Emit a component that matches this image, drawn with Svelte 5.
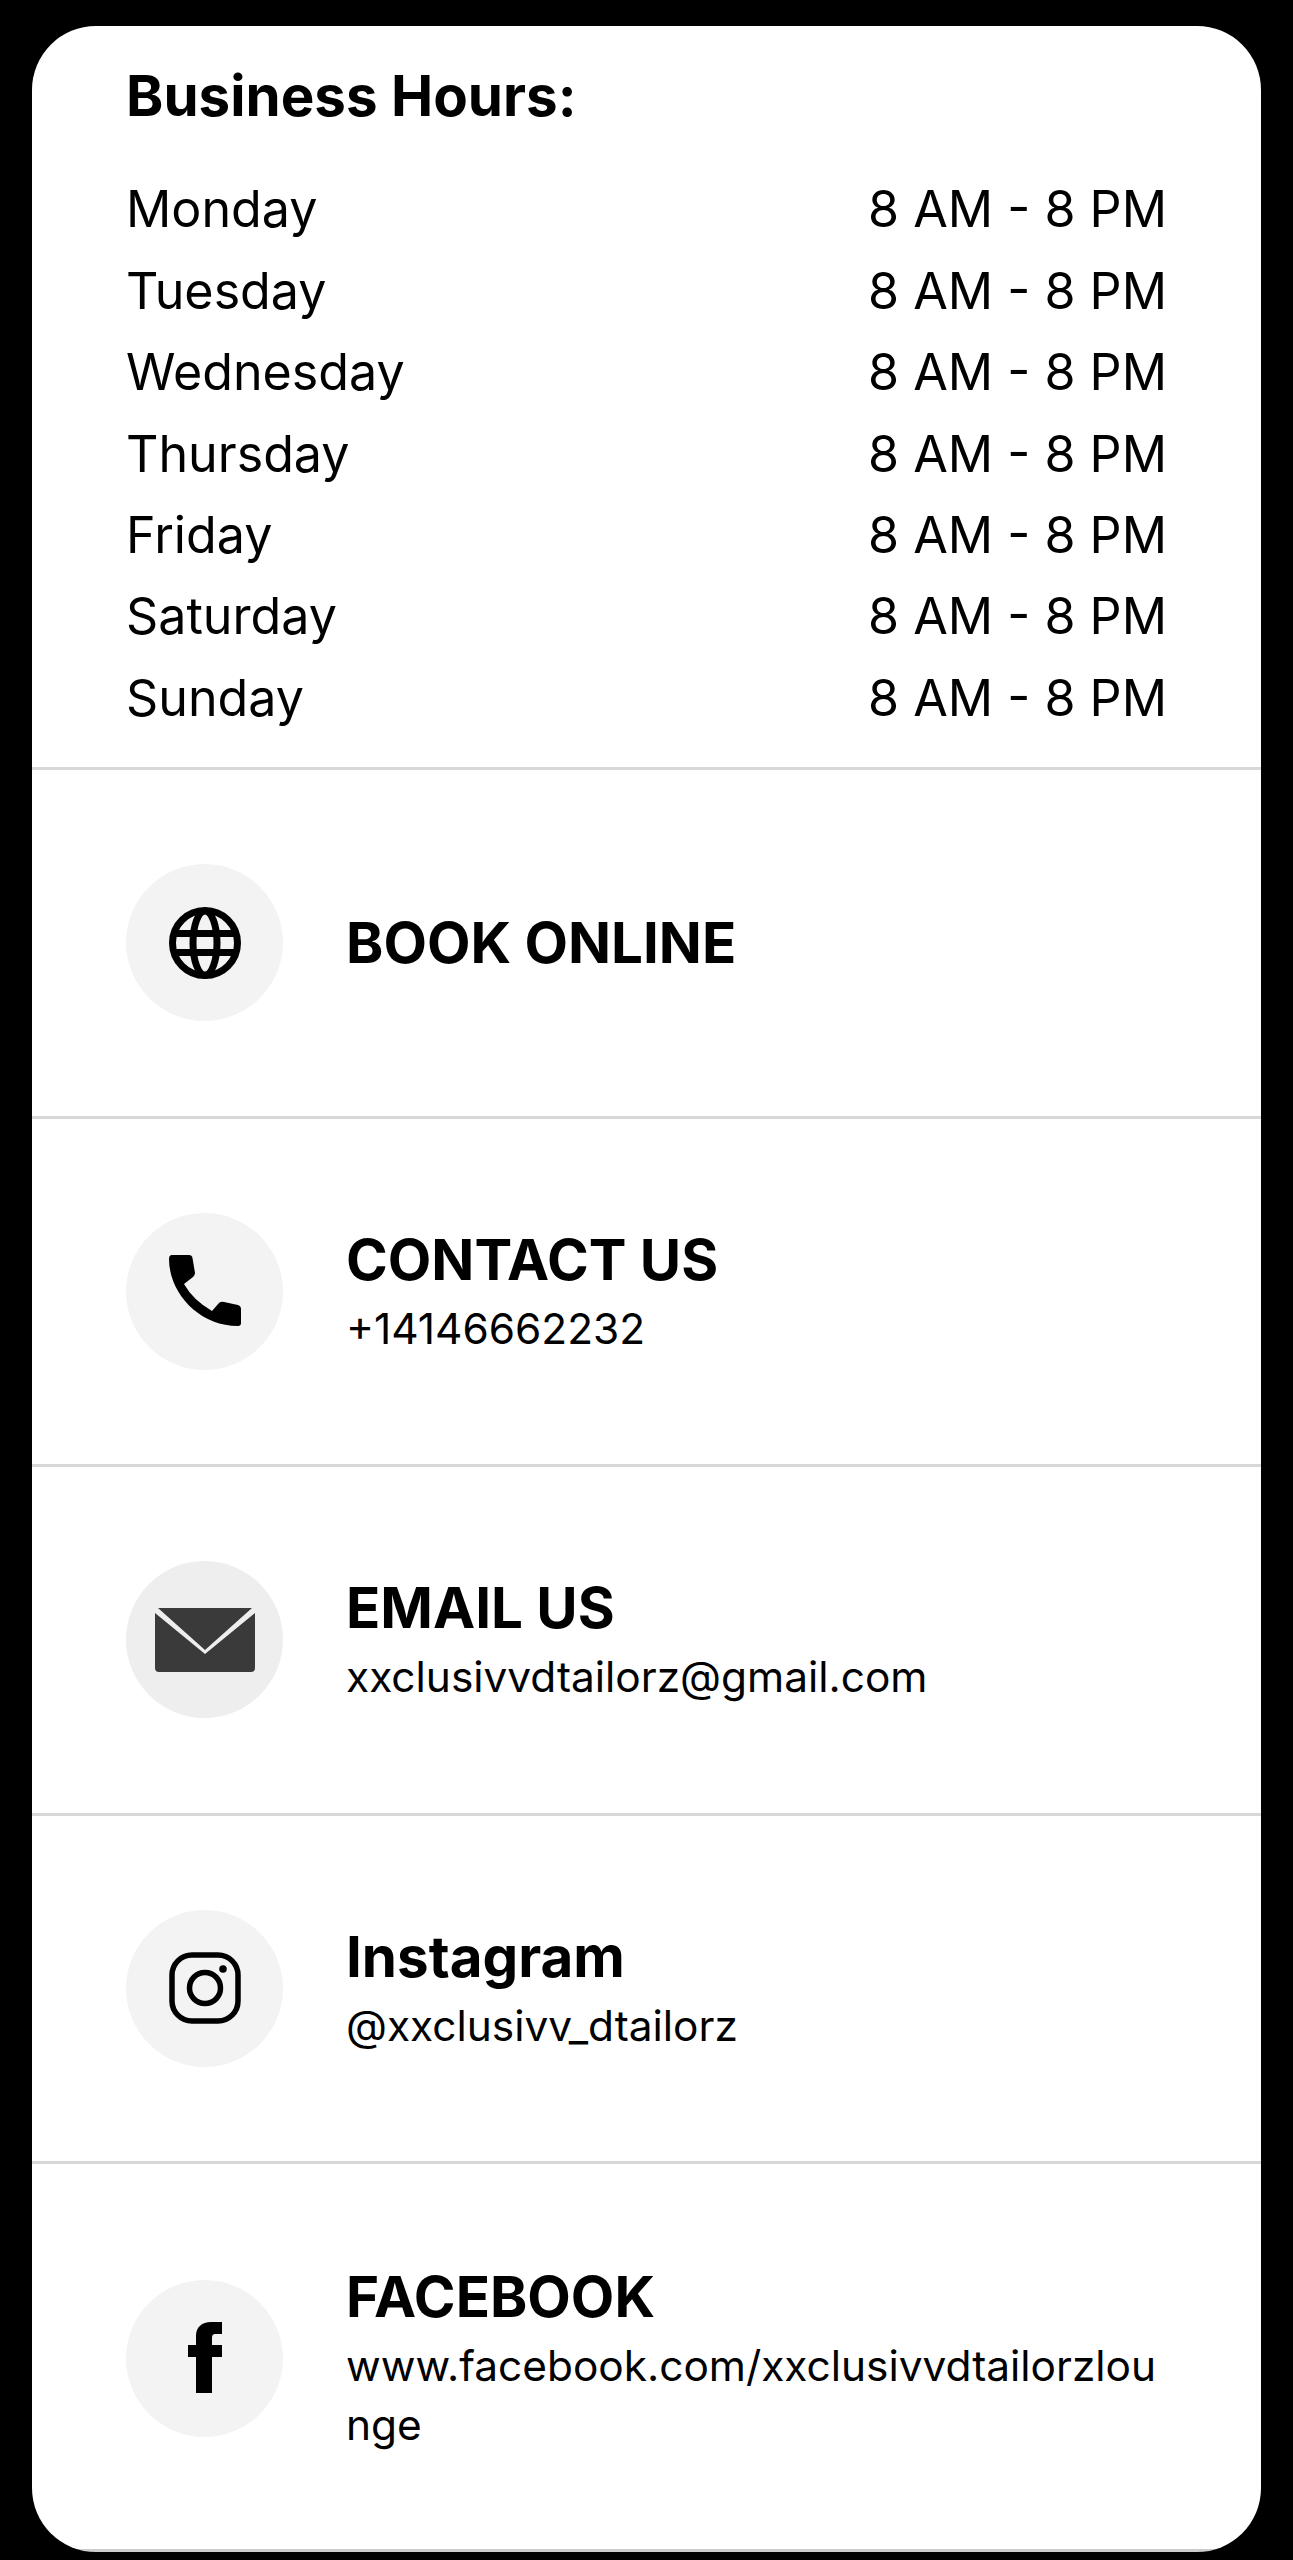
<script>
	const days = ['Monday', 'Tuesday', 'Wednesday', 'Thursday', 'Friday', 'Saturday', 'Sunday'];
</script>

<div class="page">
	<main class="card">
		<section class="hours">
			<h2>Business Hours:</h2>
			{#each days as day}
				<div class="day">
					<span>{day}</span>
					<span>8 AM - 8 PM</span>
				</div>
			{/each}
		</section>

		<div class="row">
			<div class="icon">
				<svg width="72" height="72" viewBox="0 0 72 72" fill="none" stroke="#000" stroke-width="7">
					<circle cx="36" cy="36" r="32.5" />
					<ellipse cx="36" cy="36" rx="12" ry="32" />
					<path d="M4 26.5H68M4 45.5H68" />
				</svg>
			</div>
			<div class="text">
				<div class="title">BOOK ONLINE</div>
			</div>
		</div>

		<div class="row">
			<div class="icon">
				<svg width="72" height="72" viewBox="0 0 72 72">
					<path d="M3 0H20Q23 0 23.5 3L26 18Q26 20 24 22L15 29Q24 45 43 56L50 48Q52 46 55 47L69 50Q72 51 72 54V68Q72 71 69 71C30 71 0 38 0 4Q0 0 3 0Z" />
				</svg>
			</div>
			<div class="text">
				<div class="title">CONTACT US</div>
				<div class="sub">+14146662232</div>
			</div>
		</div>

		<div class="row">
			<div class="icon mail">
				<svg width="100" height="64" viewBox="0 0 100 64">
					<path d="M3 0H97L50 42ZM0 5L50 46L100 5V60Q100 64 96 64H4Q0 64 0 60Z" fill="#3a3a3a" />
				</svg>
			</div>
			<div class="text">
				<div class="title">EMAIL US</div>
				<div class="sub">xxclusivvdtailorz@gmail.com</div>
			</div>
		</div>

		<div class="row">
			<div class="icon">
				<svg width="72" height="72" viewBox="0 0 72 72" fill="none" stroke="#000" stroke-width="5.5">
					<rect x="3" y="3" width="66" height="66" rx="20" />
					<circle cx="36" cy="36" r="15.5" />
					<circle cx="54" cy="17" r="3.8" fill="#000" stroke="none" />
				</svg>
			</div>
			<div class="text">
				<div class="title">Instagram</div>
				<div class="sub">@xxclusivv_dtailorz</div>
			</div>
		</div>

		<div class="row last">
			<div class="icon">
				<svg width="34" height="72" viewBox="0 0 34 72">
					<path d="M8 71V35H0V23H8V14C8 5 14 0 23 0H34V12H27C25 12 24 13 24 16V23H34V35H24V71Z" />
				</svg>
			</div>
			<div class="text">
				<div class="title">FACEBOOK</div>
				<div class="sub">www.facebook.com/xxclusivvdtailorzlounge</div>
			</div>
		</div>
	</main>
</div>

<style>
	:global(body) {
		margin: 0;
		background: #000;
	}

	.page {
		box-sizing: border-box;
		height: 2560px;
		padding: 26px 32px 8px;
		font-family: Inter, 'Liberation Sans', sans-serif;
		color: #000;
	}

	.card {
		background: linear-gradient(to top, #ccc 3px, #fff 3px);
		border-radius: 64px;
		height: 100%;
		overflow: hidden;
		display: flex;
		flex-direction: column;
	}

	.hours {
		padding: 32px 94px 0 94px;
		height: 741px;
		box-sizing: border-box;
	}

	h2 {
		margin: 0 0 34.3px;
		font-size: 56.5px;
		line-height: 76px;
		font-weight: 700;
	}

	.day {
		display: flex;
		justify-content: space-between;
		font-size: 50.2px;
		line-height: 81.4px;
	}

	.row {
		box-sizing: border-box;
		height: 348.5px;
		display: flex;
		align-items: center;
		gap: 63px;
		padding: 0 95px 0 94px;
		border-top: 3px solid #d8d8d8;
	}

	.row.last {
		flex: 1;
	}

	.icon {
		flex: none;
		width: 157px;
		height: 157px;
		border-radius: 50%;
		background: #f3f3f3;
		display: flex;
		align-items: center;
		justify-content: center;
	}

	.icon.mail {
		background: #eee;
	}

	.text {
		flex: 1;
		min-width: 0;
	}

	.title {
		font-size: 56.5px;
		line-height: 70px;
		font-weight: 700;
	}

	.sub {
		font-size: 42.4px;
		line-height: 59px;
		word-break: break-all;
		margin-top: 4px;
	}
</style>
